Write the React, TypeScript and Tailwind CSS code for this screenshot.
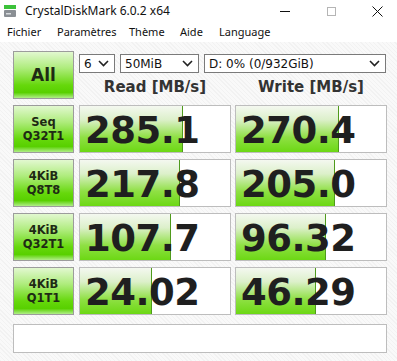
import React from "react";

const rows = [
  { l1: "Seq", l2: "Q32T1", read: "285.1", write: "270.4" },
  { l1: "4KiB", l2: "Q8T8", read: "217.8", write: "205.0" },
  { l1: "4KiB", l2: "Q32T1", read: "107.7", write: "96.32" },
  { l1: "4KiB", l2: "Q1T1", read: "24.02", write: "46.29" },
];

// bar length is on a log scale, like the real app
const barWidth = (v: string) => Math.round(32 + 29 * Math.log10(parseFloat(v)));

const ui = { fontFamily: '"Noto Sans", "Open Sans", sans-serif' };
const tah = { fontFamily: '"DejaVu Sans", Verdana, sans-serif' };

function Chevron() {
  return (
    <svg width="11" height="7" viewBox="0 0 11 7" className="shrink-0">
      <polyline points="1,1 5.5,5.5 10,1" fill="none" stroke="#222" strokeWidth="1.6" />
    </svg>
  );
}

function Select({ value, w }: { value: string; w: string }) {
  return (
    <div
      className={`${w} h-[19px] bg-white border border-[#7a7a7a] flex items-center justify-between pl-[4px] pr-[5px] text-[12px] text-[#111]`}
      style={tah}
    >
      <span>{value}</span>
      <Chevron />
    </div>
  );
}

function TestButton({ children }: { children: React.ReactNode }) {
  return (
    <div
      className="w-[61px] h-[48px] shrink-0 border border-[#9c9c9c] flex flex-col items-center justify-center bg-[linear-gradient(to_bottom,#e2f8d0_0%,#aeec7c_35%,#66d80c_72%,#58d000_88%,#b0ee88_100%)] text-[#1e2a14] font-bold"
      style={tah}
    >
      {children}
    </div>
  );
}

function ResultCell({ value }: { value: string }) {
  return (
    <div className="relative w-[152px] h-[48px] shrink-0 bg-white border border-[#bdbdbd] overflow-hidden flex items-center">
      <div
        className="absolute left-0 top-0 bottom-0 border-r border-[#4f9a1c] bg-[linear-gradient(to_bottom,#f4f8f0_0%,#dcf0ca_30%,#8fe044_68%,#6cd814_100%)]"
        style={{ width: barWidth(value) }}
      />
      <span
        className="relative pl-[5px] pt-[2px] text-[37px] font-bold leading-none text-[#1f1f1f] tracking-[-0.5px]"
        style={tah}
      >
        {value}
      </span>
    </div>
  );
}

export default function App() {
  return (
    <div className="w-[397px] h-[361px] flex flex-col overflow-hidden bg-white select-none">
      {/* title bar */}
      <div className="h-[22px] flex items-center shrink-0" style={ui}>
        <svg width="12" height="12" viewBox="0 0 12 12" className="ml-[4px]">
          <rect x="0" y="0" width="12" height="4" fill="#3cc23a" />
          <rect x="0" y="5" width="12" height="7" rx="1" fill="#8a8f94" />
          <rect x="2" y="8" width="5" height="1.5" fill="#d8dcdf" />
        </svg>
        <span className="ml-[9px] text-[12px] text-[#111]">CrystalDiskMark 6.0.2 x64</span>
        <div className="ml-auto flex -mr-[3px] h-full">
          <div className="w-[46px] flex items-center justify-center">
            <div className="w-[10px] h-px bg-[#111]" />
          </div>
          <div className="w-[46px] flex items-center justify-center">
            <div className="w-[9px] h-[9px] border border-[#b5b5b5]" />
          </div>
          <div className="w-[46px] flex items-center justify-center">
            <svg width="11" height="11" viewBox="0 0 11 11">
              <path d="M0.5 0.5 L10.5 10.5 M10.5 0.5 L0.5 10.5" stroke="#111" strokeWidth="1" />
            </svg>
          </div>
        </div>
      </div>

      {/* menu bar */}
      <div className="h-[20px] flex items-center pl-[7px] text-[11px] text-[#111] shrink-0" style={ui}>
        <span className="w-[50px]">Fichier</span>
        <span className="w-[72px]">Paramètres</span>
        <span className="w-[51px]">Thème</span>
        <span className="w-[39px]">Aide</span>
        <span>Language</span>
      </div>

      {/* main panel */}
      <div className="flex-1 pt-[9px] pl-[13px] bg-[repeating-linear-gradient(45deg,#f2f2f2_0px,#f2f2f2_1px,#f9f9f9_1px,#f9f9f9_3px)]">
        <div className="flex h-[48px]">
          <TestButton>
            <span className="text-[17px] leading-none">All</span>
          </TestButton>
          <div className="ml-[5px] w-[308px] flex flex-col">
            <div className="mt-[3px] flex gap-[5px]">
              <Select value="6" w="w-[36px]" />
              <Select value="50MiB" w="w-[79px]" />
              <Select value="D: 0% (0/932GiB)" w="w-[182px]" />
            </div>
            <div className="flex-1 flex items-center text-[15px] font-bold text-[#333]" style={tah}>
              <div className="w-[152px] text-center pt-[3px]">Read [MB/s]</div>
              <div className="ml-[4px] w-[152px] text-center pt-[3px]">Write [MB/s]</div>
            </div>
          </div>
        </div>

        {rows.map((r, i) => (
          <div key={i} className="flex mt-[6px]">
            <TestButton>
              <span className="text-[11.5px] leading-[14px]">{r.l1}</span>
              <span className="text-[11.5px] leading-[14px]">{r.l2}</span>
            </TestButton>
            <div className="ml-[5px]">
              <ResultCell value={r.read} />
            </div>
            <div className="ml-[4px]">
              <ResultCell value={r.write} />
            </div>
          </div>
        ))}

        <div className="mt-[9px] w-[374px] h-[29px] bg-white border border-[#bdbdbd]" />
      </div>
    </div>
  );
}
